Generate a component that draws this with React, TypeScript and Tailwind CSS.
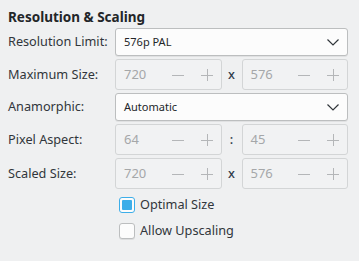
import React from 'react';

const font = { fontFamily: '"Noto Sans", "Open Sans", sans-serif' };

const Chevron = () => (
  <svg width="12" height="7" viewBox="0 0 12 7" className="text-[#31363b]">
    <path d="M0.5 0.5 L6 6 L11.5 0.5" fill="none" stroke="currentColor" strokeWidth="1.2" />
  </svg>
);

const Combo = ({ value }: { value: string }) => (
  <div className="h-[28px] flex items-center justify-between rounded-[3px] border border-[#bcbebf] bg-[#fcfcfc] pl-[8px] pr-[8px] text-[11px] text-[#232629] shadow-[0_1px_0_rgba(0,0,0,0.06)]">
    <span>{value}</span>
    <Chevron />
  </div>
);

const Spin = ({ value }: { value: string }) => (
  <div className="h-[31px] flex items-center rounded-[3px] border border-[#d3d5d6] bg-[#f1f2f3] pl-[8px] text-[13px] text-[#a5a7a9]">
    <span className="flex-1">{value}</span>
    <svg width="12" height="12" viewBox="0 0 12 12" className="mr-[17px] text-[#b4b6b8]">
      <path d="M0 6.5 H12" stroke="currentColor" strokeWidth="1" />
    </svg>
    <svg width="12" height="12" viewBox="0 0 12 12" className="mr-[8px] text-[#b4b6b8]">
      <path d="M0 6.5 H12 M6.5 0 V12" stroke="currentColor" strokeWidth="1" />
    </svg>
  </div>
);

const SpinPair = ({ a, b, sep }: { a: string; b: string; sep: string }) => (
  <div className="grid grid-cols-[1fr_20px_1fr] items-center">
    <Spin value={a} />
    <span className="text-center text-[#2f3a4a] font-medium">{sep}</span>
    <Spin value={b} />
  </div>
);

const Row = ({ label, children }: { label: string; children: React.ReactNode }) => (
  <div className="grid grid-cols-[107px_1fr] items-center">
    <span className="text-[#31363b]">{label}</span>
    {children}
  </div>
);

const Check = ({ checked, label }: { checked?: boolean; label: string }) => (
  <div className="flex items-center gap-[5px] h-[16px]">
    {checked ? (
      <div className="w-[16px] h-[16px] rounded-[3px] border border-[#3daee9] bg-[#fcfcfc] p-[2px]">
        <div className="w-full h-full rounded-[1px] bg-[#3daee9]" />
      </div>
    ) : (
      <div className="w-[16px] h-[16px] rounded-[3px] border border-[#bcbebf] bg-[#fcfcfc] shadow-[0_1px_0_rgba(0,0,0,0.08)]" />
    )}
    <span className="text-[#31363b]">{label}</span>
  </div>
);

export default function App() {
  return (
    <div className="w-[359px] h-[261px] bg-[#eff0f1] text-[12.7px] pl-[8px] pr-[11px] pt-[7px]" style={font}>
      <div className="font-bold text-[13.5px] text-[#232629] h-[20px] leading-[20px]">Resolution &amp; Scaling</div>
      <div className="flex flex-col gap-[3px] mt-[1px]">
        <Row label="Resolution Limit:">
          <Combo value="576p PAL" />
        </Row>
        <Row label="Maximum Size:">
          <SpinPair a="720" b="576" sep="x" />
        </Row>
        <Row label="Anamorphic:">
          <Combo value="Automatic" />
        </Row>
        <Row label="Pixel Aspect:">
          <SpinPair a="64" b="45" sep=":" />
        </Row>
        <Row label="Scaled Size:">
          <SpinPair a="720" b="576" sep="x" />
        </Row>
      </div>
      <div className="flex flex-col gap-[10px] mt-[8px] pl-[111px]">
        <Check checked label="Optimal Size" />
        <Check label="Allow Upscaling" />
      </div>
    </div>
  );
}
